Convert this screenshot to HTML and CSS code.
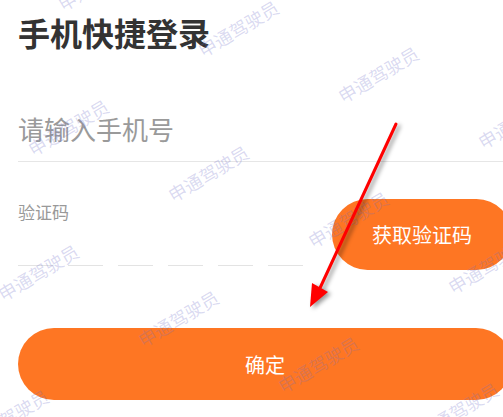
FILE: index.html
```html
<!DOCTYPE html>
<html lang="zh-CN">
<head>
    <meta charset="UTF-8">
    <meta name="viewport" content="width=device-width, initial-scale=1.0">
    <title>手机快捷登录</title>
    <link rel="stylesheet" href="styles.css">
</head>
<body>
    <div class="page" id="page">
        <div class="content">
            <h1 class="title">手机快捷登录</h1>

            <div class="phone-field">请输入手机号</div>

            <div class="code-row">
                <div class="code-left">
                    <div class="code-label">验证码</div>
                    <div class="code-slots">
                        <span class="slot"></span>
                        <span class="slot"></span>
                        <span class="slot"></span>
                        <span class="slot"></span>
                        <span class="slot"></span>
                        <span class="slot"></span>
                    </div>
                </div>
                <div class="btn-code">获取验证码</div>
            </div>

            <div class="btn-confirm">确定</div>
        </div>

        <!-- 水印 -->
        <div class="watermarks" id="watermarks"></div>

        <!-- 标注箭头 -->
        <svg class="arrow" width="503" height="417" viewBox="0 0 503 417">
            <line x1="396" y1="124" x2="320" y2="288" stroke="#ff0000" stroke-width="3" stroke-linecap="round"/>
            <polygon points="310,307 312,283 328,292" fill="#ff0000"/>
        </svg>
    </div>

    <script>
        // 水印按网格铺满页面
        const layer = document.getElementById('watermarks');
        for (let r = -1; r < 4; r++) {
            for (let c = -1; c < 5; c++) {
                const x = 98 + 140 * c - 30 * r;
                const y = -18 + 46 * c + 145 * r;
                if (x < -60 || x > 560 || y < -40 || y > 460) continue;
                const mark = document.createElement('span');
                mark.className = 'mark';
                mark.textContent = '申通驾驶员';
                mark.style.left = x + 'px';
                mark.style.top = y + 'px';
                layer.appendChild(mark);
            }
        }
    </script>
</body>
</html>
```

FILE: styles.css
```css
body {
    margin: 0;
    background-color: #fff;
    font-family: "Noto Sans CJK SC", "Noto Sans", sans-serif;
}
.page {
    position: relative;
    width: 503px;
    height: 417px;
    overflow: hidden;
}
.content {
    width: 494px;
    padding: 12px 0 0 18px;
}
.title {
    margin: 0;
    font-size: 32px;
    line-height: 40px;
    font-weight: bold;
    color: #333;
}
.phone-field {
    margin-top: 52px;
    margin-right: -9px;
    padding: 12px 0 19px;
    font-size: 26px;
    line-height: 26px;
    color: #9a9a9a;
    border-bottom: 1px solid #e6e6e6;
}
.code-row {
    display: flex;
    align-items: flex-start;
    margin-top: 37px;
}
.code-left {
    flex: 1;
}
.code-label {
    margin-top: 4px;
    font-size: 17px;
    line-height: 17px;
    color: #999;
}
.code-slots {
    display: flex;
    gap: 15px;
}
.slot {
    width: 35px;
    height: 45px;
    border-bottom: 1px solid #e3e3e3;
}
.btn-code {
    width: 180px;
    height: 71px;
    border-radius: 36px;
    background-color: #fe7623;
    color: #fff;
    font-size: 20px;
    display: flex;
    align-items: center;
    justify-content: center;
}
.btn-confirm {
    margin-top: 58px;
    height: 72px;
    border-radius: 36px;
    background-color: #fe7623;
    color: #fff;
    font-size: 20px;
    display: flex;
    align-items: center;
    justify-content: center;
}
.watermarks {
    position: absolute;
    inset: 0;
    pointer-events: none;
}
.mark {
    position: absolute;
    transform: translate(-50%, -50%) rotate(-31deg);
    font-size: 18px;
    line-height: 18px;
    white-space: nowrap;
    color: rgba(110, 110, 200, 0.26);
}
.arrow {
    position: absolute;
    left: 0;
    top: 0;
    pointer-events: none;
    filter: drop-shadow(3px 2px 2px rgba(0, 0, 0, 0.4));
}
```
